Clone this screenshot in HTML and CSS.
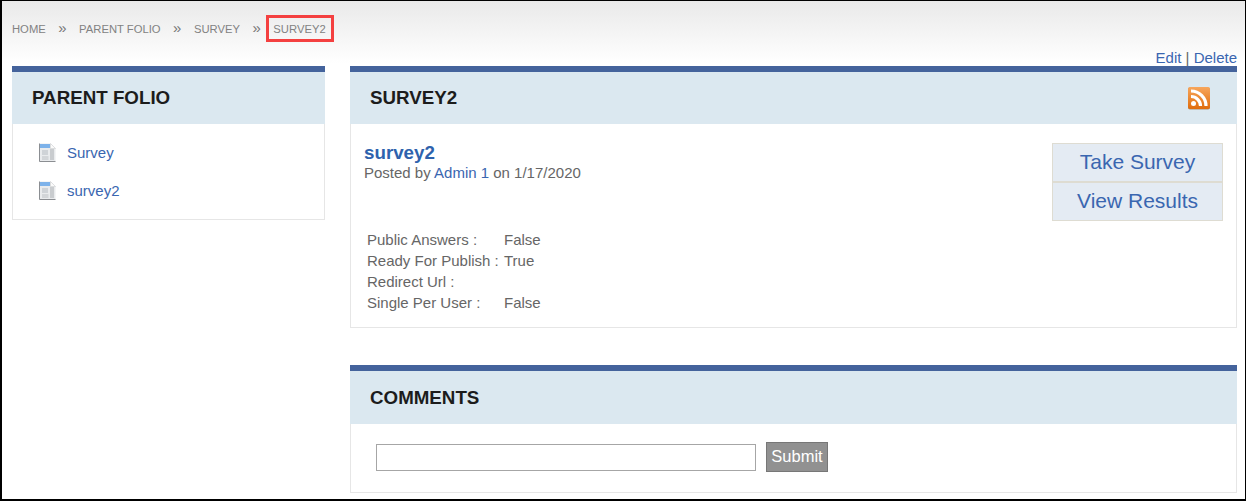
FILE: index.html
```html
<!doctype html>
<html lang="en">
  <head>
    <meta charset="utf-8" />
    <title>survey2</title>
    <link rel="stylesheet" href="styles.css">
  </head>
  <body>
    <div class="page">
      <ul class="crumbs">
        <li><a href="#">Home</a></li>
        <li class="sep">»</li>
        <li><a href="#">Parent Folio</a></li>
        <li class="sep">»</li>
        <li><a href="#">Survey</a></li>
        <li class="sep">»</li>
        <li class="current">Survey2</li>
      </ul>
      <div class="tools"><a href="#">Edit</a> | <a href="#">Delete</a></div>
      <div class="cols">
        <div class="panel side">
          <h2 class="panel-head">Parent Folio</h2>
          <ul class="doc-list">
            <li>
              <svg class="doc" width="17" height="19" viewBox="0 0 17 19">
                <path d="M.5.5h11l5 5v13H.5z" fill="#e9ebed" />
                <path d="M.5.5v18h16" fill="none" stroke="#8b8e92" />
                <path d="M1 1h10v4H1z" fill="#7db2ea" />
                <path d="M11.5.5l5 5h-5z" fill="#fbfbfb" stroke="#c4c6c9" stroke-width=".5" />
                <rect x="3" y="7" width="6" height="5" fill="#cfd3d7" />
                <rect x="11" y="6" width="4" height="11" fill="#c9cccf" />
                <path d="M3 14h6.500M3 16h6.500" stroke="#bcc0c4" />
              </svg>
              <a href="#">Survey</a>
            </li>
            <li>
              <svg class="doc" width="17" height="19" viewBox="0 0 17 19">
                <path d="M.5.5h11l5 5v13H.5z" fill="#e9ebed" />
                <path d="M.5.5v18h16" fill="none" stroke="#8b8e92" />
                <path d="M1 1h10v4H1z" fill="#7db2ea" />
                <path d="M11.5.5l5 5h-5z" fill="#fbfbfb" stroke="#c4c6c9" stroke-width=".5" />
                <rect x="3" y="7" width="6" height="5" fill="#cfd3d7" />
                <rect x="11" y="6" width="4" height="11" fill="#c9cccf" />
                <path d="M3 14h6.500M3 16h6.500" stroke="#bcc0c4" />
              </svg>
              <a href="#">survey2</a>
            </li>
          </ul>
        </div>
        <div class="main">
          <div class="panel">
            <div class="panel-head">
              <h2>Survey2</h2>
              <svg class="rss" width="24" height="24" viewBox="0 0 24 24">
                <defs>
                  <linearGradient id="rssbg" x1="0" y1="0" x2="0" y2="1">
                    <stop offset="0" stop-color="#f7a65c" />
                    <stop offset="1" stop-color="#e06c0c" />
                  </linearGradient>
                </defs>
                <rect x="1" y="1.500" width="22" height="22" rx="2" fill="#a98c70" />
                <rect x="1" y="1" width="22" height="22" rx="2" fill="url(#rssbg)" />
                <circle cx="6.500" cy="17.500" r="2.500" fill="#fff" />
                <path d="M4 10.500a9.500 9.500 0 0 1 9.500 9.500M4 5a15 15 0 0 1 15 15" fill="none" stroke="#fff" stroke-width="3.200" />
              </svg>
            </div>
            <div class="post">
              <div class="post-top">
                <div>
                  <a class="post-title" href="#">survey2</a>
                  <div class="byline">Posted by <a href="#">Admin 1</a> on 1/17/2020</div>
                </div>
                <div class="actions">
                  <a href="#">Take Survey</a>
                  <a href="#">View Results</a>
                </div>
              </div>
              <dl class="fields">
                <dt>Public Answers :</dt><dd>False</dd>
                <dt>Ready For Publish :</dt><dd>True</dd>
                <dt>Redirect Url :</dt><dd></dd>
                <dt>Single Per User :</dt><dd>False</dd>
              </dl>
            </div>
          </div>
          <div class="panel comments">
            <h2 class="panel-head">Comments</h2>
            <form class="comment-form">
              <input type="text" />
              <button type="button">Submit</button>
            </form>
          </div>
        </div>
      </div>
    </div>
  </body>
</html>
```

FILE: styles.css
```css
:root { --blue:#3a66b0; --bar:#44639c; --head:#dbe8f0; --line:#e6e6e6; --text:#666; }
*{ box-sizing:border-box; }
html, body{ margin:0; height:100%; }
body{ font-family: "Liberation Sans", Arial, sans-serif; color: var(--text); background:#fff; }
a{ color: var(--blue); text-decoration:none; }
.page{ height:501px; overflow:hidden; border:1px solid #000; border-width:1px 1px 2px 2px; padding:14px 7px 0 10px; background: linear-gradient(#e9e9e9, #fff 62px); }

.crumbs{ list-style:none; margin:0; padding:0; display:flex; align-items:center; height:27px; font-size:11.250px; text-transform:uppercase; }
.crumbs a{ color:#828282; }
.crumbs .sep{ color:#777; font-size:15px; margin:-3px 12.500px 0; }
.crumbs .current{ color:#828282; border:3px solid #f44040; height:27px; line-height:22px; padding:0 5px 0 4px; margin-left:-7px; }

.tools{ text-align:right; font-size:15px; line-height:16px; margin:8px 1px 0 0; height:16px; }
.cols{ display:grid; grid-template-columns:313px 887px; gap:25px; align-items:start; }
.panel{ border:1px solid var(--line); border-top:0; background:#fff; }
.panel-head{ display:flex; align-items:center; justify-content:space-between; margin:-0 -1px 0; height:58px; padding:0 26px 0 20px; background:var(--head); border-top:6px solid var(--bar); }
.panel-head, .panel-head h2{ font-size:18.750px; font-weight:bold; color:#1c1c1c; text-transform:uppercase; }
.panel-head h2{ margin:0; }

.doc-list{ list-style:none; margin:0; padding:9px 0 10px 26px; font-size:15px; }
.doc-list li{ display:flex; align-items:center; gap:11px; height:38px; }

.post{ padding:18px 13px 0 13px; height:203px; }
.post-top{ display:flex; justify-content:space-between; align-items:flex-start; height:87px; }
.post-title{ display:block; font-size:18.750px; font-weight:bold; line-height:22px; color:#2e62ad; }
.byline{ font-size:15px; line-height:17px; }
.actions{ width:171px; margin-top:1px; display:flex; flex-direction:column; }
.actions a{ display:block; height:39px; line-height:35px; text-align:center; font-size:21px; background:#e4ebf3; border:1px solid #dedcd2; }
.fields{ margin:0 0 0 3px; display:grid; grid-template-columns:137px 1fr; font-size:15px; line-height:21px; }
.fields dd{ margin:0; }

.comments{ margin-top:37px; }
.comments .panel-head{ height:59px; }
.comment-form{ display:flex; align-items:flex-start; gap:10px; height:68px; padding:18px 0 0 25px; }
.comment-form input{ width:380px; height:27px; margin-top:2px; border:1px solid #a6a6a6; background:#fff; }
.comment-form button{ width:62px; height:30px; padding:0 0 2px; background:#919191; border:1px solid #777; color:#fff; font:16.500px "Liberation Sans", Arial, sans-serif; }
```
